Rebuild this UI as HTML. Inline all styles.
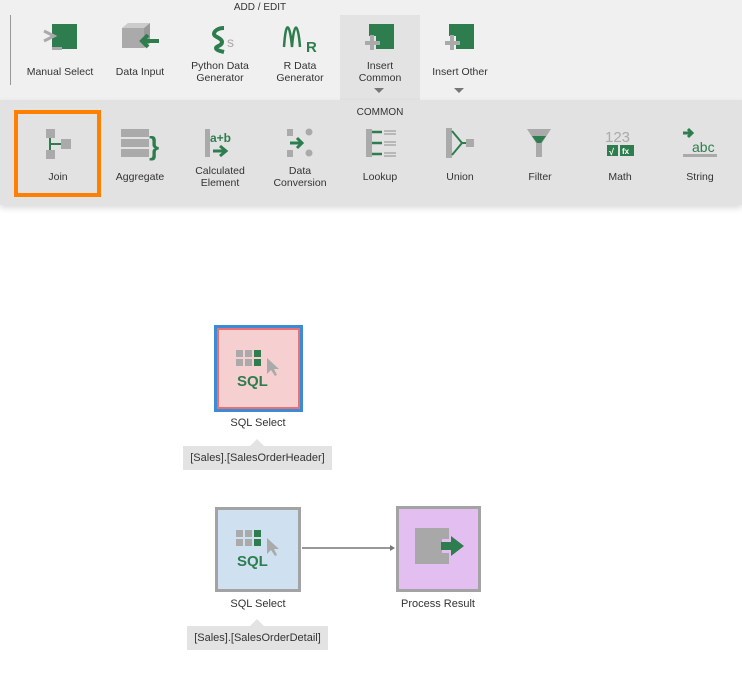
<!DOCTYPE html>
<html><head><meta charset="utf-8"><style>
*{margin:0;padding:0;box-sizing:border-box}
body{width:742px;height:673px;background:#fff;font-family:"Liberation Sans",sans-serif;color:#333;position:relative;overflow:hidden}
.a{position:absolute}
.t{font-size:10.5px;text-align:center;line-height:12px;color:#333}
</style></head><body>
<div class="a" style="left:0;top:0;width:742px;height:100px;background:#f0f0f0"></div>
<div class="a" style="left:340px;top:15px;width:80px;height:85px;background:#e3e3e3"></div>
<div class="a t" style="left:200px;top:2px;width:120px;font-size:10px">ADD / EDIT</div>
<div class="a" style="left:10px;top:15px;width:1px;height:70px;background:#999"></div>
<div class="a" style="left:0;top:100px;width:742px;height:105px;background:#e2e2e2;box-shadow:0 3px 6px rgba(0,0,0,.15)"></div>
<div class="a t" style="left:340px;top:107px;width:80px;font-size:10px">COMMON</div>

<svg class="a" style="left:0;top:0" width="742" height="205">
<rect x="52" y="24" width="25" height="25" fill="#2e7d4f"/>
<path d="M44 31l10 5-10 5" stroke="#aaa" stroke-width="3" fill="none"/><rect x="52" y="47" width="10" height="3" fill="#aaa"/>
<rect x="122" y="28" width="22" height="20" fill="#aaa"/><path d="M122 28l6-5h22l-6 5z" fill="#ccc"/><path d="M144 28l6-5v20l-6 5z" fill="#999"/>
<path d="M142 41h17M148 35l-6 6 6 6" stroke="#2e7d4f" stroke-width="4" fill="none"/>
<path d="M224 28c-6 0-10 3-10 6s8 4 8 8-6 4-6 6 4 3 8 4" stroke="#2e7d4f" stroke-width="4" fill="none"/>
<text x="227" y="47" font-size="14" fill="#aaa" font-family="Liberation Sans">s</text>
<path d="M284 47c2-30 6-22 8 0M292 47c2-26 6-26 8 0" stroke="#2e7d4f" stroke-width="2.5" fill="none"/>
<text x="306" y="52" font-size="15" font-weight="bold" fill="#2e7d4f" font-family="Liberation Sans">R</text>
<rect x="369" y="24" width="25" height="25" fill="#2e7d4f"/><rect x="364" y="36" width="12" height="14" fill="#e3e3e3"/><path d="M372 35v15M365 43h15" stroke="#aaa" stroke-width="4"/>
<rect x="449" y="24" width="25" height="25" fill="#2e7d4f"/><rect x="444" y="36" width="12" height="14" fill="#f0f0f0"/><path d="M452 35v15M445 43h15" stroke="#aaa" stroke-width="4"/>
<path d="M374 88h10l-5 5z M454 88h10l-5 5z" fill="#777"/>
<rect x="16" y="112" width="83" height="83" fill="none" stroke="#ff8000" stroke-width="4"/>
<rect x="46" y="129" width="9" height="9" fill="#aaa"/><rect x="46" y="150" width="9" height="9" fill="#aaa"/><rect x="61" y="139" width="10" height="10" fill="#aaa"/>
<path d="M50 138v12M50 144h11" stroke="#2e7d4f" stroke-width="2"/>
<rect x="121" y="129" width="28" height="8" fill="#aaa"/><rect x="121" y="139" width="28" height="8" fill="#aaa"/><rect x="121" y="149" width="28" height="8" fill="#aaa"/>
<text x="149" y="155" font-size="26" fill="#2e7d4f" font-weight="bold" font-family="Liberation Sans">}</text>
<rect x="205" y="129" width="5" height="28" fill="#aaa"/><text x="210" y="142" font-size="12" fill="#2e7d4f" font-weight="bold">a+b</text><path d="M213 151h12M220 146l6 5-6 5" stroke="#2e7d4f" stroke-width="3" fill="none"/>
<rect x="287" y="129" width="6" height="7" fill="#aaa"/><rect x="287" y="150" width="6" height="7" fill="#aaa"/><circle cx="309" cy="132" r="3.5" fill="#aaa"/><circle cx="309" cy="153" r="3.5" fill="#aaa"/>
<path d="M290 143h10M297 138l5 5-5 5" stroke="#2e7d4f" stroke-width="3" fill="none"/>
<rect x="366" y="129" width="6" height="28" fill="#aaa"/><path d="M372 132h10M372 143h10M372 154h10" stroke="#2e7d4f" stroke-width="2.5"/><path d="M384 131h12M384 134h12M384 142h12M384 145h12M384 153h12M384 156h12" stroke="#aaa" stroke-width="1.5"/>
<rect x="446" y="128" width="6" height="30" fill="#aaa"/><path d="M452 131l10 12-10 12M462 143h4" stroke="#2e7d4f" stroke-width="2" fill="none"/><rect x="466" y="139" width="8" height="8" fill="#aaa"/>
<path d="M527 129h24l-9 14v14h-6v-14z" fill="#aaa"/><path d="M532 136h14l-5 7h-4z" fill="#2e7d4f"/>
<text x="605" y="142" font-size="15" fill="#aaa">123</text><rect x="607" y="145" width="11" height="11" fill="#2e7d4f"/><rect x="620" y="145" width="14" height="11" fill="#2e7d4f"/>
<text x="609" y="155" font-size="9" fill="#fff" font-weight="bold">√</text><text x="622" y="154" font-size="8" fill="#fff" font-weight="bold">fx</text>
<path d="M683 133h8M688 129l4 4-4 4" stroke="#2e7d4f" stroke-width="3" fill="none"/>
<text x="692" y="152" font-size="14" fill="#2e7d4f">abc</text><rect x="683" y="154" width="34" height="3" fill="#aaa"/>
</svg>

<div class="a t" style="left:20px;top:66px;width:80px">Manual Select</div>
<div class="a t" style="left:100px;top:66px;width:80px">Data Input</div>
<div class="a t" style="left:180px;top:60px;width:80px">Python Data<br>Generator</div>
<div class="a t" style="left:260px;top:60px;width:80px">R Data<br>Generator</div>
<div class="a t" style="left:340px;top:60px;width:80px">Insert<br>Common</div>
<div class="a t" style="left:420px;top:66px;width:80px">Insert Other</div>

<div class="a t" style="left:18px;top:171px;width:80px">Join</div>
<div class="a t" style="left:100px;top:171px;width:80px">Aggregate</div>
<div class="a t" style="left:180px;top:165px;width:80px">Calculated<br>Element</div>
<div class="a t" style="left:260px;top:165px;width:80px">Data<br>Conversion</div>
<div class="a t" style="left:340px;top:171px;width:80px">Lookup</div>
<div class="a t" style="left:420px;top:171px;width:80px">Union</div>
<div class="a t" style="left:500px;top:171px;width:80px">Filter</div>
<div class="a t" style="left:580px;top:171px;width:80px">Math</div>
<div class="a t" style="left:660px;top:171px;width:80px">String</div>

<div class="a" style="left:214px;top:325px;width:89px;height:87px;background:#3b8bd6;padding:3px"><div style="width:100%;height:100%;background:#f6d0d0;border:2px solid #e87272"></div></div>
<div class="a" style="left:215px;top:507px;width:86px;height:85px;background:#cfe1f0;border:3px solid #a3a3a3"></div>
<div class="a" style="left:396px;top:506px;width:85px;height:86px;background:#e2bff0;border:3px solid #a3a3a3"></div>
<svg class="a" style="left:0;top:0" width="742" height="673">
<g id="sq">
<rect x="236" y="350" width="7" height="7" fill="#aaa"/><rect x="245" y="350" width="7" height="7" fill="#aaa"/><rect x="254" y="350" width="7" height="7" fill="#2e7d4f"/>
<rect x="236" y="359" width="7" height="7" fill="#aaa"/><rect x="245" y="359" width="7" height="7" fill="#aaa"/><rect x="254" y="359" width="7" height="7" fill="#2e7d4f"/>
<path d="M267 358v16l4-4 4 6 2-1-3-6h5z" fill="#aaa"/>
<text x="237" y="386" font-size="15" font-weight="bold" fill="#2e7d4f" font-family="Liberation Sans">SQL</text>
</g>
<use href="#sq" x="0" y="180"/>
<path d="M302 548h90" stroke="#777" stroke-width="1.5"/><path d="M390 545l5 3-5 3z" fill="#777"/>
<path d="M415 528h34v11h-7v14h7v11h-34z" fill="#a8a8a8"/><path d="M441 542h10v-6l13 10-13 10v-6h-10z" fill="#2e7d4f"/>
<path d="M250 446l7-7 7 7z M250 626l7-7 7 7z" fill="#e3e3e3"/>
</svg>
<div class="a t" style="left:208px;top:417px;width:100px;font-size:11px">SQL Select</div>
<div class="a t" style="left:208px;top:598px;width:100px;font-size:11px">SQL Select</div>
<div class="a t" style="left:388px;top:598px;width:100px;font-size:11px">Process Result</div>
<div class="a t" style="left:183px;top:446px;width:149px;height:24px;line-height:24px;background:#e3e3e3;font-size:11px">[Sales].[SalesOrderHeader]</div>
<div class="a t" style="left:187px;top:626px;width:141px;height:24px;line-height:24px;background:#e3e3e3;font-size:11px">[Sales].[SalesOrderDetail]</div>
</body></html>
